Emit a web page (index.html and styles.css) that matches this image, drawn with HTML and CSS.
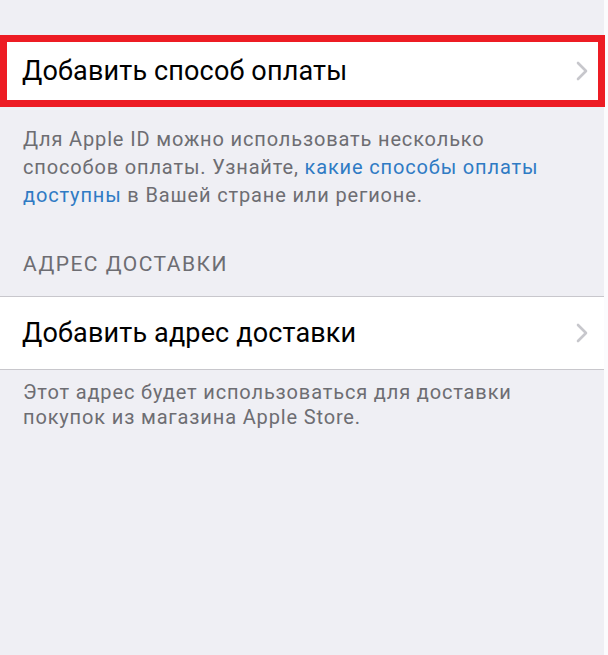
FILE: index.html
```html
<!DOCTYPE html>
<html lang="ru">
<head>
<meta charset="utf-8">
<link rel="stylesheet" href="styles.css">
</head>
<body>
<main class="screen">
  <div class="cell cell-selected">
    <span class="cell-title">Добавить способ оплаты</span>
    <svg class="chevron" width="12" height="20" viewBox="0 0 12 20"><path d="M2 2 L10 10 L2 18" fill="none" stroke="#c7c7cc" stroke-width="2.6" stroke-linecap="round" stroke-linejoin="round"/></svg>
  </div>
  <p class="footer footer-first">Для Apple ID можно использовать несколько способов оплаты. Узнайте, <span class="link">какие способы оплаты доступны</span> в Вашей стране или регионе.</p>
  <h2 class="section-header">АДРЕС ДОСТАВКИ</h2>
  <div class="cell cell-bordered">
    <span class="cell-title">Добавить адрес доставки</span>
    <svg class="chevron" width="12" height="20" viewBox="0 0 12 20"><path d="M2 2 L10 10 L2 18" fill="none" stroke="#c7c7cc" stroke-width="2.6" stroke-linecap="round" stroke-linejoin="round"/></svg>
  </div>
  <p class="footer footer-second">Этот адрес будет использоваться для доставки покупок из магазина Apple Store.</p>
</main>
</body>
</html>
```

FILE: styles.css
```css
html {
  background: #fbfbfd;
}
body {
  margin: 0;
  font-family: Roboto, "Liberation Sans", sans-serif;
}
.screen {
  width: 604px;
  height: 655px;
  background: #efeff4;
  padding-top: 35px;
  box-sizing: border-box;
  display: flex;
  flex-direction: column;
}
.cell {
  display: flex;
  align-items: center;
  justify-content: space-between;
  background: #fff;
  box-sizing: border-box;
  padding: 0 16px 0 22px;
}
.cell-selected {
  height: 72px;
  width: 605px;
  border: 7px solid #ed1c24;
  padding: 0 10px 0 15px;
}
.cell-bordered {
  height: 74px;
  border-top: 1px solid #c8c7cc;
  border-bottom: 1px solid #c8c7cc;
}
.cell-title {
  font-size: 27px;
  color: #000;
  letter-spacing: 0.15px;
}
.chevron {
  display: block;
  flex: none;
}
.footer {
  margin: 0;
  padding: 0 20px 0 23px;
  font-size: 20px;
  letter-spacing: 0.85px;
  color: #6d6d72;
}
.footer-first {
  padding-top: 18px;
  line-height: 28px;
}
.footer-second {
  padding-top: 10px;
  line-height: 25px;
}
.link {
  color: #2f7bc4;
}
.section-header {
  margin: 43px 0 20px;
  padding-left: 23px;
  font-weight: normal;
  font-size: 21px;
  letter-spacing: 1.5px;
  line-height: 24px;
  color: #6d6d72;
}
```
